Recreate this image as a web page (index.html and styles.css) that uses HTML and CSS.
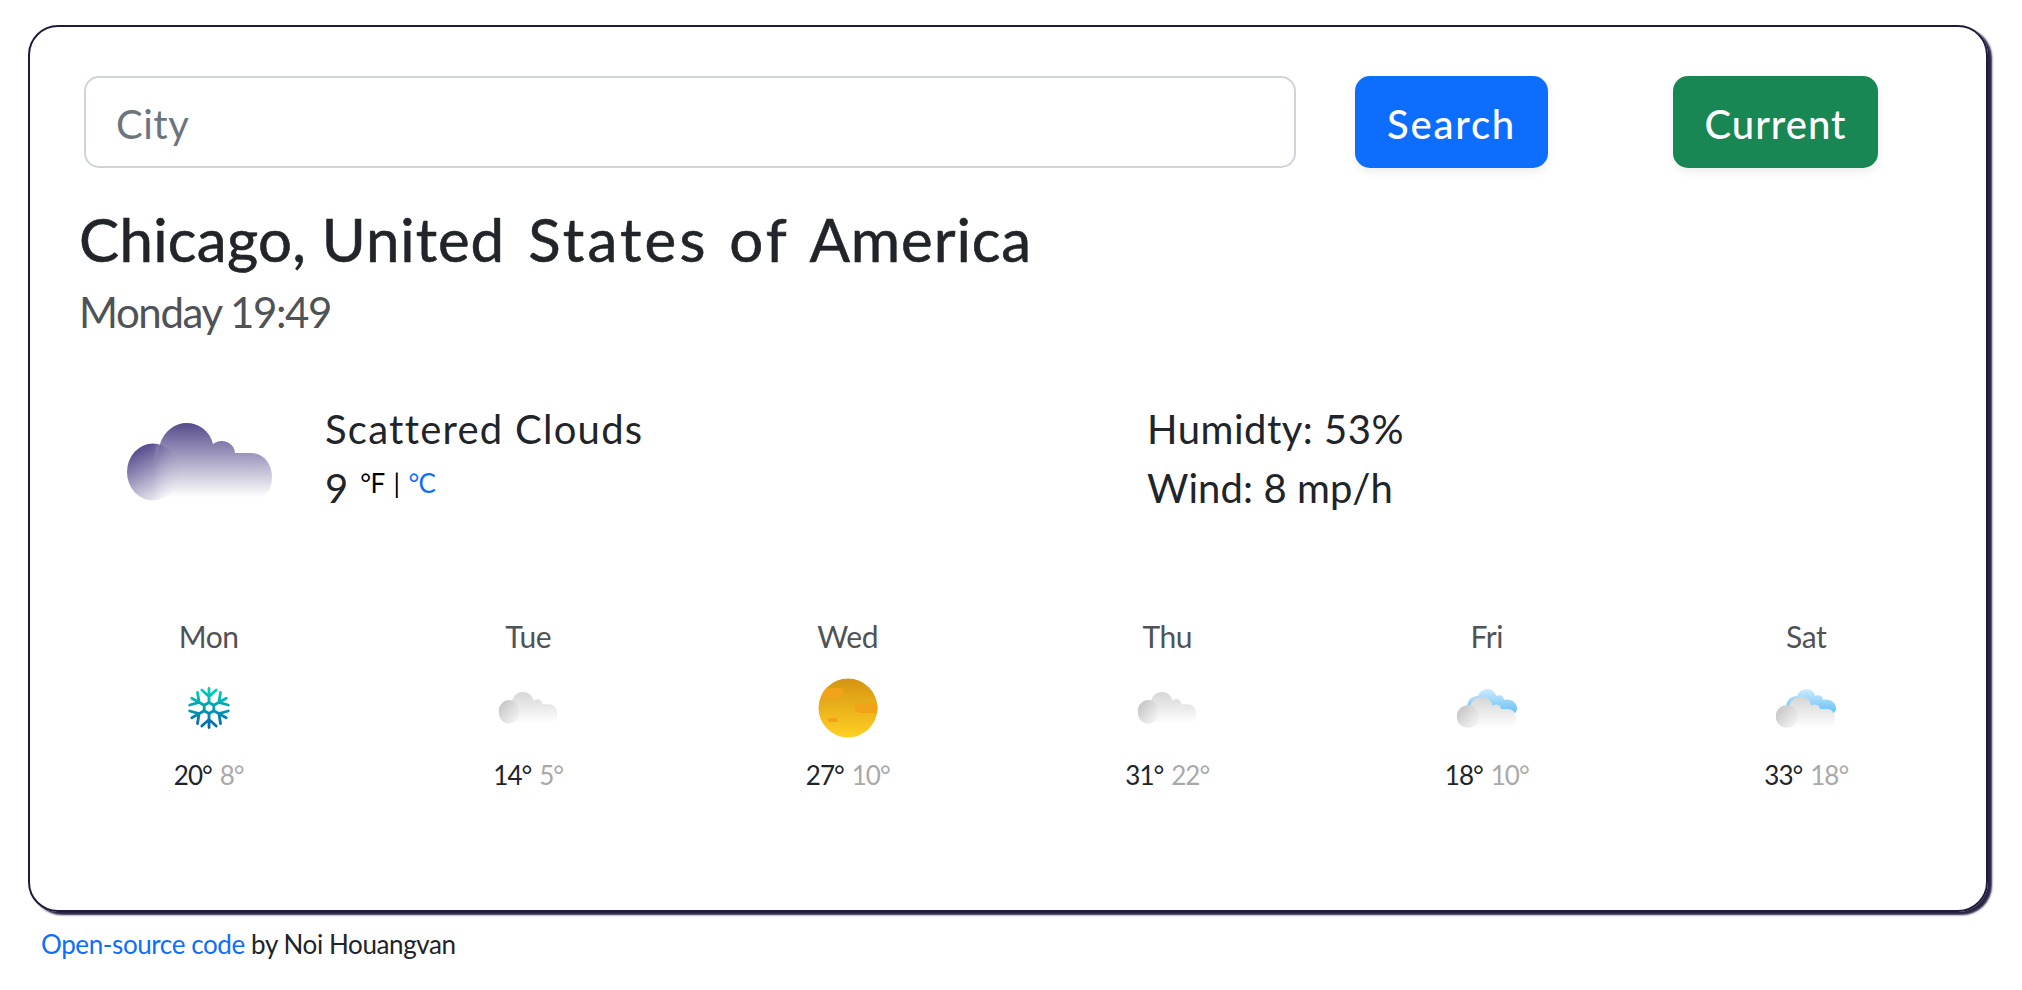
FILE: index.html
```
<!DOCTYPE html>
<html lang="en">
<head>
<meta charset="utf-8">
<title>Weather</title>
<link rel="stylesheet" href="styles.css">
</head>
<body>
<svg class="defs" aria-hidden="true">
  <defs>
    <linearGradient id="purple" x1="0" y1="0" x2="0" y2="1"><stop offset="0" stop-color="#564b8c"/><stop offset=".95" stop-color="#fff"/></linearGradient>
    <linearGradient id="purpleBall" x1=".3" y1=".05" x2=".75" y2=".95"><stop offset="0" stop-color="#574c8e"/><stop offset="1" stop-color="#f1f0f6"/></linearGradient>
    <linearGradient id="fade" x1="0" y1="0" x2="1" y2="0"><stop offset=".5" stop-color="#fff"/><stop offset="1" stop-color="#fff" stop-opacity="0"/></linearGradient>
    <mask id="ballMask" maskUnits="userSpaceOnUse" x="0" y="0" width="60" height="80"><rect width="54" height="80" fill="url(#fade)"/></mask>
    <linearGradient id="gray" x1="0" y1="0" x2="0" y2="1"><stop offset="0" stop-color="#d6d6d6"/><stop offset="1" stop-color="#fff"/></linearGradient>
    <linearGradient id="grayBall" x1=".1" y1=".15" x2=".85" y2=".85"><stop offset="0" stop-color="#c6c6c6"/><stop offset="1" stop-color="#f2f2f2"/></linearGradient>
    <linearGradient id="blue" x1="0" y1="0" x2="0" y2="1"><stop offset="0" stop-color="#cdebfd"/><stop offset="1" stop-color="#66c0f6"/></linearGradient>
    <linearGradient id="sun" x1="0" y1="0" x2="0" y2="1"><stop offset="0" stop-color="#d59412"/><stop offset="1" stop-color="#ffd024"/></linearGradient>
    <linearGradient id="snow" gradientUnits="userSpaceOnUse" x1="0" y1="-21" x2="0" y2="21"><stop offset="0" stop-color="#00d8b8"/><stop offset="1" stop-color="#0461b0"/></linearGradient>
    <clipPath id="disc"><circle cx="30" cy="30" r="29.500"/></clipPath>
    <path id="cloudBody" d="M25 78L26 49L33 21C37 8 48 0 59.500 0C72 0 83 8 86 21C95 14 108 20 108 30H124C137 30 145 41 145 54C145 68 136 78 123 78Z"/>
    <symbol id="cloud" viewBox="0 0 145 79">
      <use href="#cloudBody" fill="url(#gray)"/><ellipse cx="26" cy="49" rx="26" ry="29" fill="url(#grayBall)"/>
    </symbol>
    <symbol id="broken" viewBox="0 0 60 39">
      <path d="M10 19C10 12 14 7 21 7C23 2 27 0 31 0C35 0 38 3 39.500 7C43 5 47 7 47 11C54 9 60 14 60 19C60 21 59 23 58 24H12Z" fill="url(#blue)"/>
      <path d="M11 39C6 37 6 22 13 17C15 11 20 8 25 8C30 8 34 11 35.500 16.500C39 14 44 16 44 20H51C56 20 59 24 59 29C59 35 56 39 50 39Z" fill="url(#gray)"/>
      <circle cx="11" cy="27.500" r="11.300" fill="url(#grayBall)"/>
    </symbol>
  </defs>
</svg>

<main class="card">
  <form class="search">
    <input class="city" type="text" placeholder="City">
    <button class="btn btn-search" type="button">Search</button>
    <button class="btn btn-current" type="button">Current</button>
  </form>
  <h1 class="place"><span class="town">Chicago, </span>United <span class="wide">States of </span>America</h1>
  <p class="time">Monday 19:49</p>

  <section class="now">
    <svg class="now-icon" viewBox="0 0 145 79">
      <use href="#cloudBody" fill="url(#purple)"/><ellipse cx="26" cy="49" rx="26" ry="28.500" fill="url(#purpleBall)" mask="url(#ballMask)"/>
    </svg>
    <div class="summary">
      <div class="desc">Scattered Clouds</div>
      <div class="temp">9<span class="units"><span class="f">°F</span><span class="bar">|</span><a class="c">°C</a></span></div>
    </div>
    <div class="details">
      <div class="humid">Humidty: 53%</div>
      <div class="wind">Wind: 8 mp/h</div>
    </div>
  </section>

  <section class="forecast">
    <div class="day"><div class="name">Mon</div>
      <svg class="icon" viewBox="-30 -30 60 60"><g fill="none" stroke="url(#snow)" stroke-width="2.800" stroke-linecap="round" stroke-linejoin="round">
        <path d="M0-5.500L4.800-2.800V2.800L0 5.500L-4.800 2.800V-2.800Z"/>
        <path d="M0-5.500V-19.500M-7.200-18L0-11.500L7.200-18M0 5.500V19.500M-7.200 18L0 11.500L7.200 18"/>
        <path d="M4.800-2.800L17.200-9.800M11.500-15.500L9.900-5.700L19.300-3M-4.800 2.800L-17.200 9.800M-11.500 15.500L-9.900 5.700L-19.300 3"/>
        <path d="M-4.800-2.800L-17.200-9.800M-11.500-15.500L-9.900-5.700L-19.300-3M4.800 2.800L17.200 9.800M11.500 15.500L9.900 5.700L19.300 3"/></g></svg>
      <div class="range"><span>20°</span><span class="low">8°</span></div></div>
    <div class="day"><div class="name">Tue</div>
      <svg class="icon" viewBox="0 0 60 60"><use href="#cloud" x=".5" y="14" width="59" height="32"/></svg>
      <div class="range"><span>14°</span><span class="low">5°</span></div></div>
    <div class="day"><div class="name">Wed</div>
      <svg class="icon" viewBox="0 0 60 60"><circle cx="30" cy="30" r="29.500" fill="url(#sun)"/><g clip-path="url(#disc)" fill="#f0a318"><rect x="3" y="10" width="23" height="10" rx="5"/><rect x="37" y="25" width="30" height="10" rx="5"/><rect x="10" y="40" width="10" height="4" rx="2"/></g></svg>
      <div class="range"><span>27°</span><span class="low">10°</span></div></div>
    <div class="day"><div class="name">Thu</div>
      <svg class="icon" viewBox="0 0 60 60"><use href="#cloud" x=".5" y="14" width="59" height="32"/></svg>
      <div class="range"><span>31°</span><span class="low">22°</span></div></div>
    <div class="day"><div class="name">Fri</div>
      <svg class="icon" viewBox="0 0 60 60"><use href="#broken" y="11" width="60" height="39"/></svg>
      <div class="range"><span>18°</span><span class="low">10°</span></div></div>
    <div class="day"><div class="name">Sat</div>
      <svg class="icon" viewBox="0 0 60 60"><use href="#broken" y="11" width="60" height="39"/></svg>
      <div class="range"><span>33°</span><span class="low">18°</span></div></div>
  </section>
</main>
<footer class="credit"><a>Open-source code</a> by Noi Houangvan</footer>
</body>
</html>
```
FILE: styles.css
```
* { box-sizing: border-box; }
body { margin: 0; padding: 25px 34px 0 28px; background: #fff; color: #212529; font-family: Lato, sans-serif; }
.defs { display: block; width: 0; height: 0; }
h1, p { margin: 0; font-weight: 400; }
.card { height: 887px; padding: 49px 20px 0 19px; border: 2px solid #1f1b3c; border-radius: 30px; box-shadow: 4px 3px 2px #2a2445; }
.search { display: flex; height: 92px; margin-left: 35px; }
.city { width: 1212px; padding: 4px 30px 0; border: 2px solid #ced4da; border-radius: 15px; font: 40px Lato, sans-serif; letter-spacing: .5px; background: #fff; }
.city::placeholder { color: #6c757d; opacity: 1; }
.btn { padding: 4px 0 0; border: 0; border-radius: 15px; color: #fff; font: 500 40px Lato, sans-serif; box-shadow: 0 4px 8px rgba(0,0,0,.075); }
.btn-search { width: 193px; margin-left: 59px; background: #0d6efd; letter-spacing: 1.8px; }
.btn-current { width: 205px; margin-left: 125px; background: #198754; letter-spacing: 1px; }
.place { margin: 35px 0 0 30px; font-size: 60px; line-height: 72px; letter-spacing: .9px; word-spacing: 7px; -webkit-text-stroke: .6px #212529; white-space: nowrap; }
.town { letter-spacing: .3px; word-spacing: 0; }
.wide { letter-spacing: 3.2px; word-spacing: 2px; }
.time { margin: 12px 0 0 30px; color: #4f5356; font-size: 42px; line-height: 50px; letter-spacing: -1.4px; }
.now { display: flex; height: 118px; margin: 63px 0 0 78px; font-size: 40px; line-height: 59px; white-space: nowrap; }
.now-icon { width: 145px; height: 79px; margin-top: 23px; }
.summary { width: 822px; margin-left: 53px; }
.desc { letter-spacing: 1.25px; }
.humid { letter-spacing: .5px; }
.wind { letter-spacing: .1px; }
.temp { display: flex; }
.units { display: flex; margin-left: 12px; font-size: 26px; line-height: 48px; letter-spacing: -.6px; color: #000; }
.bar { margin: 0 9px; }
.c, .credit a { color: #0d6efd; }
.forecast { display: grid; grid-template-columns: repeat(6, 1fr); margin-top: 100px; }
.day { display: flex; flex-direction: column; align-items: center; }
.name { color: #4f5356; font-size: 30px; line-height: 36px; letter-spacing: -.4px; }
.icon { width: 60px; height: 60px; margin-top: 24px; }
.range { display: flex; gap: 8px; margin-top: 21px; font-size: 26px; line-height: 32px; letter-spacing: -1px; }
.low { color: #a9a9a9; }
.credit { margin: 17px 0 0 13px; font-size: 26px; line-height: 30px; letter-spacing: -.4px; white-space: nowrap; }
```
